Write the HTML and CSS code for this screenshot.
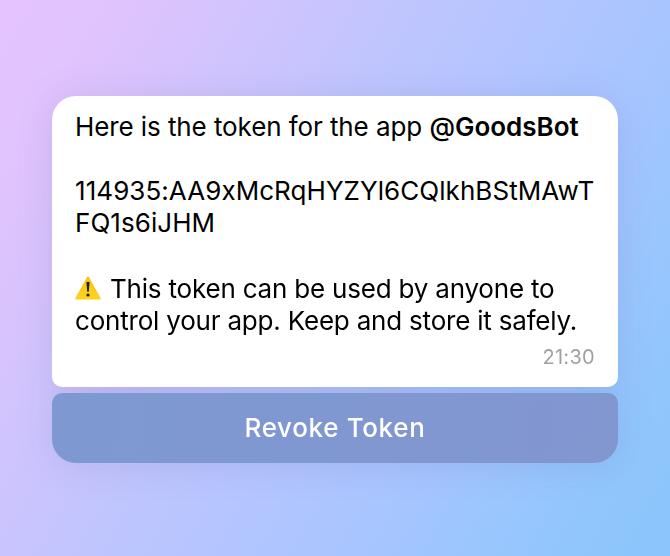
FILE: index.html
```html
<!DOCTYPE html>
<html lang="en">
<head>
<meta charset="utf-8">
<title>App token</title>
<link rel="stylesheet" href="styles.css">
</head>
<body>
<main class="message">
  <section class="bubble">
    <p class="intro"><span class="intro-text">Here is the token for the app</span> <strong class="mention"><span class="at">@</span>GoodsBot</strong></p>
    <p class="token">114935:AA9xMcRqHYZYl6CQlkhBStMAwT<br>FQ1s6iJHM</p>
    <p class="warning"><svg class="warning-icon" viewBox="0 0 26 24" aria-hidden="true"><defs><linearGradient id="amber" x2="0" y2="1"><stop stop-color="#f6c421"/><stop offset="1" stop-color="#ffd21c"/></linearGradient></defs><path d="M12 1.1Q13-.3 14 1.1L25.6 22Q26.2 23.5 24.7 23.6H1.3Q-.2 23.5.4 22Z" fill="url(#amber)"/><path d="M11.4 6.2Q13 5.3 14.6 6.2L13.8 15.4Q13 16.2 12.2 15.4Z" fill="#222017"/><circle cx="13" cy="19" r="1.6" fill="#222017"/></svg>This token can be used by anyone to<br>control your app. Keep and store it safely.</p>
    <time class="time">21:30</time>
  </section>
  <button class="revoke" type="button">Revoke Token</button>
</main>
</body>
</html>
```
FILE: styles.css
```css
* { box-sizing: border-box; }
body {
  margin: 0;
  height: 556px;
  padding: 96px 52px 0;
  overflow: hidden;
  background: linear-gradient(120deg, #e5c3ff 0%, #e0c3fd 12%, #bec5fe 43%, #a6c5ff 70%, #8fc6fc 90%, #8bc5fb 100%);
  font-family: Inter, sans-serif;
}
.message {
  display: flex;
  flex-direction: column;
  gap: 6px;
  width: 566px;
  filter: drop-shadow(0 3px 17px rgba(90, 80, 150, .15));
}
.bubble {
  display: flex;
  flex-direction: column;
  height: 291px;
  padding: 15px 23px;
  border-radius: 24px 24px 10px 10px;
  background: #fff;
  color: #000;
}
p { margin: 0 0 32px; font-size: 26px; line-height: 32px; white-space: nowrap; }
.intro-text { letter-spacing: -.09px; }
.mention { font-weight: 600; }
.at { font-weight: 500; }
.token { letter-spacing: .06px; }
.warning { margin: 2px 0 0; letter-spacing: -.2px; }
.warning-icon { width: 26px; height: 24px; margin-right: 9px; vertical-align: -2px; }
.time { align-self: flex-end; margin-top: 8px; font-size: 20px; line-height: 25px; letter-spacing: .3px; color: #a0a0a3; }
.revoke {
  height: 70px;
  padding: 0;
  border: 0;
  border-radius: 10px 10px 24px 24px;
  background: linear-gradient(100deg, #7e99d1, #8296d0);
  color: #fff;
  font: 500 26px/70px Inter, sans-serif;
  letter-spacing: .65px;
}
```
